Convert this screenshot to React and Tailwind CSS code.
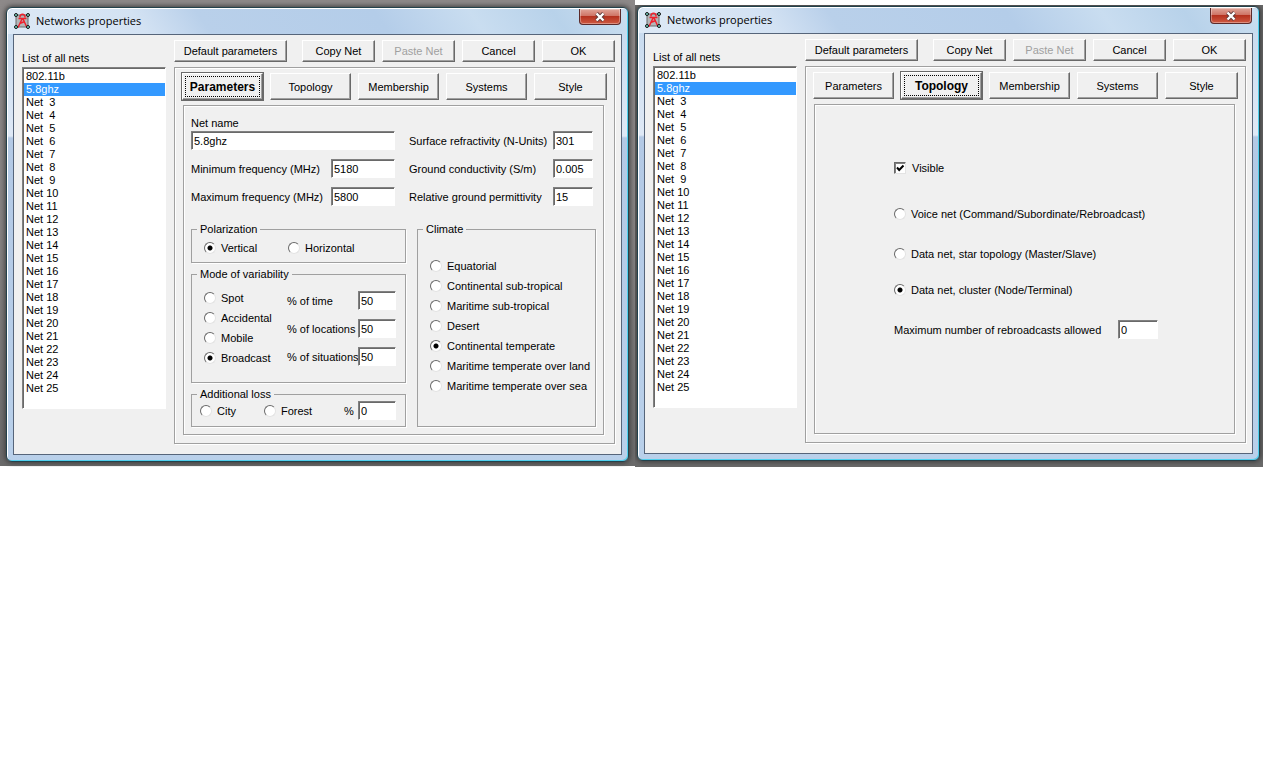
import React, { useId, useState } from 'react';

const TABS = ['Parameters', 'Topology', 'Membership', 'Systems', 'Style'];

const NETS = [
  '802.11b',
  '5.8ghz',
  ...Array.from({ length: 23 }, (_, i) => `Net ${String(i + 3).padStart(2, '\u00a0')}`),
];

const CLIMATES = [
  'Equatorial',
  'Continental sub-tropical',
  'Maritime sub-tropical',
  'Desert',
  'Continental temperate',
  'Maritime temperate over land',
  'Maritime temperate over sea',
];

const AppIcon = () => (
  <svg viewBox="0 0 16 16" className="mt-1 h-4 w-4 shrink-0" aria-hidden="true">
    <rect x="2" y="2" width="12" height="12" fill="#b4b6b8" stroke="#6a6a6a" />
    <g fill="none" stroke="#f0202c" strokeWidth="1.5">
      <path d="M6 4.5C5.500 0 11.500 0 11 4.500" />
      <path d="M4.500 5.500H12.500M8.500 5L4 14.500M8.500 5L13 14.500M5.500 10.500L11 8.500" />
    </g>
    <g fill="#7fe0cf" stroke="#111" strokeWidth="1">
      <circle cx="2" cy="2" r="1.500" />
      <circle cx="14" cy="2" r="1.500" />
      <circle cx="2" cy="14" r="1.500" />
      <circle cx="14" cy="14" r="1.500" />
    </g>
  </svg>
);

const Button = ({ className = '', ...props }) => (
  <button
    type="button"
    className={`border border-t-white border-l-white border-r-[#696969] border-b-[#696969] bg-[#f0f0f0] text-center whitespace-nowrap shadow-[inset_-1px_-1px_0_#a0a0a0] disabled:text-[#a0a0a0] ${className}`}
    {...props}
  />
);

const TextBox = ({ className = '', ...props }) => (
  <input
    type="text"
    className={`h-[19px] shrink-0 border border-t-[#808080] border-l-[#808080] border-r-white border-b-white bg-white px-0.5 shadow-[inset_1px_1px_0_#696969] outline-none ${className}`}
    {...props}
  />
);

// Label on the left, text box pushed to the right edge
const Field = ({ label, value, width }) => {
  const id = useId();
  return (
    <div className="flex h-[19px] items-center justify-between whitespace-nowrap">
      <label htmlFor={id} className="min-w-0">{label}</label>
      <TextBox id={id} defaultValue={value} className={width} />
    </div>
  );
};

const Radio = ({ label, name, checked, className = '' }) => (
  <label className={`flex h-5 items-center gap-[5px] whitespace-nowrap ${className}`}>
    <input
      type="radio"
      name={name}
      defaultChecked={checked}
      className="h-3 w-3 shrink-0 appearance-none rounded-full border border-t-[#696969] border-l-[#696969] border-r-[#e3e3e3] border-b-[#e3e3e3] bg-white checked:bg-[radial-gradient(circle,#000_2px,#fff_3px)]"
    />
    {label}
  </label>
);

const Group = ({ title, className = '', children }) => (
  <fieldset className={`min-w-0 border border-[#a0a0a0] shadow-[1px_1px_0_#fff] ${className}`}>
    <legend className="ml-[5px] h-[14px] bg-[#f0f0f0] px-[3px]">{title}</legend>
    {children}
  </fieldset>
);

const ParametersPage = () => {
  const name = useId();
  return (
    <div className="flex flex-col gap-4 px-[7px] pt-[10px] pb-[7px]">
      <div className="flex gap-[14px]">
        <div className="flex w-[204px] flex-col gap-[9px]">
          <div className="flex flex-col">
            <label htmlFor={name} className="h-[15px]">Net name</label>
            <TextBox id={name} defaultValue="5.8ghz" className="w-full" />
          </div>
          <Field label="Minimum frequency (MHz)" value="5180" width="w-16" />
          <Field label="Maximum frequency (MHz)" value="5800" width="w-16" />
        </div>
        <div className="mr-[3px] flex flex-1 flex-col gap-[9px] pt-[15px]">
          <Field label="Surface refractivity (N-Units)" value="301" width="w-10" />
          <Field label="Ground conductivity (S/m)" value="0.005" width="w-10" />
          <Field label="Relative ground permittivity" value="15" width="w-10" />
        </div>
      </div>

      <div className="flex gap-[11px]">
        <div className="flex w-[215px] flex-col gap-1">
          <Group title="Polarization" className="h-[41px]">
            <div className="flex pt-0.5 pl-3">
              <Radio name={`${name}pol`} label="Vertical" checked className="w-[84px]" />
              <Radio name={`${name}pol`} label="Horizontal" />
            </div>
          </Group>
          <Group title="Mode of variability" className="h-[116px]">
            <div className="flex pr-[9px] pl-3">
              <div className="w-[83px] shrink-0 pt-[7px]">
                <Radio name={`${name}mode`} label="Spot" />
                <Radio name={`${name}mode`} label="Accidental" />
                <Radio name={`${name}mode`} label="Mobile" />
                <Radio name={`${name}mode`} label="Broadcast" checked />
              </div>
              <div className="flex min-w-0 flex-1 flex-col gap-[9px] pt-[10px]">
                <Field label="% of time" value="50" width="w-[38px]" />
                <Field label="% of locations" value="50" width="w-[38px]" />
                <Field label="% of situations" value="50" width="w-[38px]" />
              </div>
            </div>
          </Group>
          <Group title="Additional loss" className="h-10">
            <div className="flex pr-[9px] pl-2">
              <Radio name={`${name}loss`} label="City" className="w-16" />
              <Radio name={`${name}loss`} label="Forest" className="w-20" />
              <div className="flex-1">
                <Field label="%" value="0" width="w-[38px]" />
              </div>
            </div>
          </Group>
        </div>
        <Group title="Climate" className="flex-1">
          <div className="pt-5 pl-3">
            {CLIMATES.map((c) => (
              <Radio key={c} name={`${name}climate`} label={c} checked={c === 'Continental temperate'} />
            ))}
          </div>
        </Group>
      </div>
    </div>
  );
};

const TopologyPage = () => {
  const name = useId();
  return (
    <div className="flex flex-col items-start pt-[53px] pl-[79px]">
      <label className="mb-[26px] flex h-5 items-center gap-[6px]">
        <span className="relative flex">
          <input
            type="checkbox"
            defaultChecked
            className="peer h-3 w-3 appearance-none border border-t-[#696969] border-l-[#696969] border-r-[#e3e3e3] border-b-[#e3e3e3] bg-white shadow-[inset_1px_1px_0_#808080]"
          />
          <svg viewBox="0 0 12 12" className="pointer-events-none absolute inset-0 hidden h-3 w-3 peer-checked:block" aria-hidden="true">
            <path d="M3 5.5l2.2 2.5L9.5 3.5" fill="none" stroke="#000" strokeWidth="2" />
          </svg>
        </span>
        Visible
      </label>
      <Radio name={name} label="Voice net (Command/Subordinate/Rebroadcast)" className="mb-5" />
      <Radio name={name} label="Data net, star topology (Master/Slave)" className="mb-4" />
      <Radio name={name} label="Data net, cluster (Node/Terminal)" checked className="mb-5" />
      <div className="w-[264px]">
        <Field label="Maximum number of rebroadcasts allowed" value="0" width="w-10" />
      </div>
    </div>
  );
};

const NetworksWindow = ({ initialTab }) => {
  const [tab, setTab] = useState(initialTab);
  const listId = useId();

  return (
    <section className="rounded-md border border-[#23424c] bg-[linear-gradient(#c3d8ee,#dfe9f6_128px,#b3c9e5_130px,#b9d0ea)] px-[6px] pb-[6px] shadow-[inset_-1px_-1px_0_#4fd0ee,inset_1px_1px_0_#fff,0_0_5px_1px_#3c3c3c]">
      <header className="-mx-[5px] mt-px flex h-[25px] items-start rounded-t-md bg-[linear-gradient(55deg,#dde9f6_0%,#d3e2f3_22%,#b9d0ea_32%,#b4cde9_60%,#c9ddf0_75%,#b8d2ea_88%,#cbdff0_100%)] pr-[6px] pl-[6px]">
        <AppIcon />
        <h1 className="flex-1 pt-[3px] pl-[6px] font-['Open_Sans','Noto_Sans',sans-serif] text-[11px] leading-[18px]">
          Networks properties
        </h1>
        <button
          type="button"
          aria-label="Close"
          className="flex h-4 w-[42px] items-center justify-center rounded-b border border-t-0 border-[#5b2a2a] bg-[linear-gradient(#e0a599,#cf7566_45%,#b5321f_50%,#cf5a42)] shadow-[inset_0_0_0_1px_#ffffff55]"
        >
          <svg viewBox="0 0 12 10" className="h-[10px] w-3" aria-hidden="true">
            <path d="M2.5 1.5l7 7M9.5 1.5l-7 7" stroke="#5c3b3b" strokeWidth="4" />
            <path d="M2.5 1.5l7 7M9.5 1.5l-7 7" stroke="#fff" strokeWidth="2.4" />
          </svg>
        </button>
      </header>

      <div className="flex gap-2 border border-[#56657a] bg-[#f0f0f0] pr-[6px] pb-[10px] pl-2">
        <div className="flex w-36 flex-col pt-4">
          <label htmlFor={listId} className="h-4">List of all nets</label>
          <select
            id={listId}
            size={25}
            defaultValue="5.8ghz"
            className="h-[342px] overflow-hidden border border-t-[#808080] border-l-[#808080] border-r-white border-b-white bg-white pt-0.5 shadow-[inset_1px_1px_0_#696969] outline-none"
          >
            {NETS.map((net) => (
              <option
                key={net}
                value={net}
                className="ml-px h-[13px] min-h-0 p-0 pl-0.5 leading-[13px] checked:bg-[linear-gradient(#3399ff,#3399ff)] checked:text-white"
              >
                {net}
              </option>
            ))}
          </select>
        </div>

        <div className="flex min-w-0 flex-1 flex-col pt-[5px]">
          <div className="mb-[5px] flex h-[22px] gap-[7px]">
            <Button className="mr-auto w-[113px]">Default parameters</Button>
            <Button className="w-[73px]">Copy Net</Button>
            <Button className="w-[73px]" disabled>Paste Net</Button>
            <Button className="w-[73px]">Cancel</Button>
            <Button className="w-[73px]">OK</Button>
          </div>
          <div className="border border-[#a0a0a0] px-[7px] pt-[5px] pb-2 shadow-[1px_1px_0_#fff,inset_1px_1px_0_#fff]">
            <div className="mb-[5px] grid h-[27px] grid-cols-[81fr_81fr_81fr_81fr_73fr] gap-[7px]">
              {TABS.map((t) => (
                <Button
                  key={t}
                  onClick={() => setTab(t)}
                  aria-pressed={t === tab}
                  className={t === tab ? 'font-bold text-[12px] ring-1 ring-[#696969] outline-1 -outline-offset-4 outline-dotted outline-black' : ''}
                >
                  {t}
                </Button>
              ))}
            </div>
            <div className="mr-[3px] ml-px min-h-[330px] border border-[#a0a0a0] shadow-[1px_1px_0_#fff,inset_1px_1px_0_#fff]">
              {tab === 'Parameters' && <ParametersPage />}
              {tab === 'Topology' && <TopologyPage />}
            </div>
          </div>
        </div>
      </div>
    </section>
  );
};

export default function App() {
  return (
    <main className="flex items-start bg-white pr-[17px] font-['Liberation_Sans',Arial,sans-serif] text-[11px] leading-[14px] text-black">
      <div className="min-w-0 shrink grow basis-[635px] bg-[linear-gradient(#8d8989,#858282_50%,#6a6a6a)] px-[6px] pt-[7px] pb-1">
        <NetworksWindow initialTab="Parameters" />
      </div>
      <div className="mt-[5px] min-w-0 shrink grow basis-[628px] overflow-hidden bg-[#6a6a6a] pt-px pr-[3px] pb-[6px] pl-0.5">
        <NetworksWindow initialTab="Topology" />
      </div>
    </main>
  );
}
